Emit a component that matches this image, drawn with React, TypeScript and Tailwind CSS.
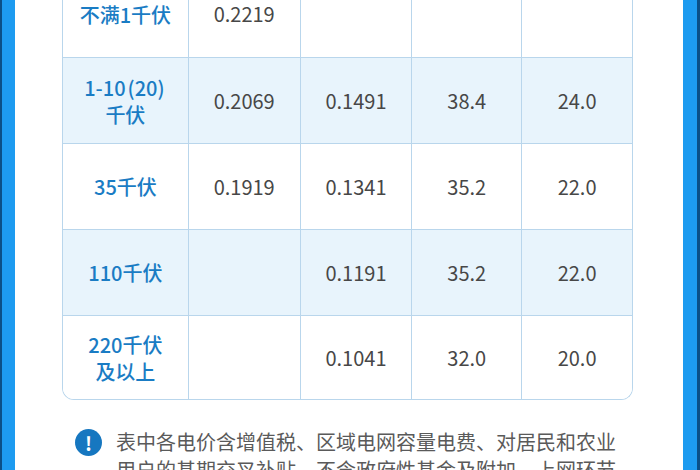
import React from 'react';

type Row = { label: React.ReactNode; cells: string[] };

const rows: Row[] = [
  { label: '不满1千伏', cells: ['0.2219', '', '', ''] },
  { label: <>1-10<span className="mx-[2px]">(20)</span><br />千伏</>, cells: ['0.2069', '0.1491', '38.4', '24.0'] },
  { label: '35千伏', cells: ['0.1919', '0.1341', '35.2', '22.0'] },
  { label: '110千伏', cells: ['', '0.1191', '35.2', '22.0'] },
  { label: <>220千伏<br />及以上</>, cells: ['', '0.1041', '32.0', '20.0'] },
];

const widths = ['w-[112px]', 'w-[112px]', 'w-[110px]', 'w-[111px]'];

export default function App() {
  return (
    <div
      className="flex h-[470px] w-[700px] overflow-hidden bg-white"
      style={{ fontFamily: '"Noto Sans CJK SC", "Noto Sans", sans-serif' }}
    >
      {/* left frame */}
      <div className="flex h-full w-[15px] shrink-0">
        <div className="w-[2px] bg-[#0b4f86]" />
        <div className="flex-1 bg-[#1d9bf0]" />
      </div>

      <div className="flex flex-1 flex-col">
        {/* table */}
        <div className="ml-[47px] -mt-[29px] w-[571px] shrink-0 overflow-hidden rounded-b-[12px] border border-t-0 border-[#b9d6ec]">
          {rows.map((row, i) => (
            <div
              key={i}
              className={`flex ${i === rows.length - 1 ? 'h-[84px]' : 'h-[86px]'} ${
                i > 0 ? 'border-t border-[#b9d6ec]' : ''
              } ${i % 2 === 1 ? 'bg-[#e8f4fc]' : 'bg-white'}`}
            >
              <div className="flex w-[125px] items-center justify-center text-center text-[20px] font-medium leading-[27px] text-[#1a7cc4]">
                <span>{row.label}</span>
              </div>
              {row.cells.map((c, j) => (
                <div
                  key={j}
                  className={`flex ${widths[j]} items-center justify-center border-l border-[#b9d6ec] text-[20px] text-[#474747]`}
                >
                  {c}
                </div>
              ))}
            </div>
          ))}
        </div>

        {/* note */}
        <div className="ml-[60px] mt-[28px] flex shrink-0 gap-[14px]">
          <div className="mt-[1px] flex h-[27px] w-[27px] shrink-0 items-center justify-center rounded-full bg-[#1677c0] text-[19px] font-bold leading-none text-white">
            !
          </div>
          <p className="w-[510px] text-[20px] leading-[28px] text-[#5a5a5a]">
            表中各电价含增值税、区域电网容量电费、对居民和农业用户的基期交叉补贴，不含政府性基金及附加，上网环节
          </p>
        </div>
      </div>

      {/* right frame */}
      <div className="flex h-full w-[17px] shrink-0">
        <div className="flex-1 bg-[#1d9bf0]" />
        <div className="w-[3px] bg-[#0b4f86]" />
      </div>
    </div>
  );
}
